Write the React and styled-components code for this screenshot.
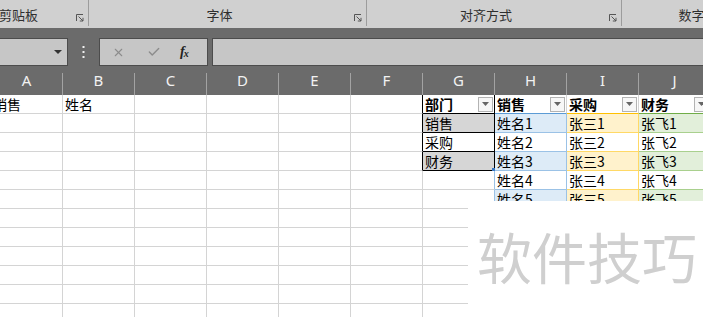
import styled, { createGlobalStyle } from "styled-components";
import { X, Check } from "lucide-react";

const GlobalStyle = createGlobalStyle`
  html, body { margin: 0; padding: 0; background: #fff; overflow: hidden; }
  body {
    width: 703px;
    height: 317px;
    font-family: "Noto Sans CJK SC", "Noto Sans", sans-serif;
  }
  * { box-sizing: border-box; }
`;

const Page = styled.div`
  width: 703px;
  height: 317px;
  overflow: hidden;
  display: flex;
  flex-direction: column;
`;

/* ribbon group captions */
const Ribbon = styled.div`
  height: 28px;
  background: #d0d0d0;
  display: flex;
  flex-shrink: 0;
`;

const Group = styled.div`
  position: relative;
  flex: 0 0 ${(p) => p.$w}px;
  margin-left: ${(p) => p.$offset || 0}px;
  border-right: 1px solid #9c9c9c;
  height: 26px;
  display: flex;
  justify-content: center;
  padding: 7px 16px 0 0;
  font-size: 13px;
  line-height: 16px;
  color: #2e2e2e;
  white-space: nowrap;
  &:last-child { border-right: none; }
`;

const Launcher = styled.svg`
  position: absolute;
  right: 4px;
  top: 14px;
  width: 8px;
  height: 8px;
`;

/* dark area: formula bar + column letters */
const Dark = styled.div`
  background: #6b6b6b;
  padding-top: 10px;
  flex-shrink: 0;
`;

const FormulaRow = styled.div`
  height: 28px;
  display: flex;
  align-items: stretch;
`;

const Box = styled.div`
  background: #c6c6c6;
  border: 1px solid #4c4c4c;
  display: flex;
  align-items: center;
`;

const NameBox = styled(Box)`
  width: 70px;
  margin-left: -2px;
  justify-content: flex-end;
  padding-right: 5px;
`;

const Dots = styled.div`
  width: 31px;
  display: flex;
  align-items: center;
  justify-content: center;
`;

const FnBox = styled(Box)`
  width: 109px;
  padding-left: 12px;
  gap: 22px;
  color: #8c8c8c;
`;

const Fx = styled.span`
  font-family: "Liberation Serif", serif;
  font-style: italic;
  font-weight: bold;
  color: #222;
  font-size: 14px;
  letter-spacing: -1px;
  margin-left: -3px;
  sub { font-size: 10px; vertical-align: -1px; }
`;

const Input = styled(Box)`
  flex: 1;
  margin-left: 4px;
  margin-right: -2px;
`;

const Grid = styled.div`
  display: grid;
  grid-template-columns: repeat(10, 72px);
  margin-left: -9px;
`;

const HeaderGrid = styled(Grid)`
  grid-auto-rows: 29px;
`;

const ColHead = styled.div`
  position: relative;
  color: #f2f2f2;
  font-family: "Noto Sans", sans-serif;
  font-size: 15px;
  line-height: 29px;
  text-align: center;
  padding-right: 1px;
  &::after {
    content: "";
    position: absolute;
    right: 0;
    top: 7px;
    bottom: 0;
    width: 1px;
    background: #a3a3a3;
  }
`;

/* worksheet */
const SheetArea = styled.div`
  position: relative;
  flex: 1;
  overflow: hidden;
`;

const CellGrid = styled(Grid)`
  grid-auto-rows: 19px;
`;

const Cell = styled.div`
  position: relative;
  background: ${(p) => p.$fill || "#fff"};
  border-right: 1px solid ${(p) => p.$right || "#d4d4d4"};
  border-bottom: 1px solid ${(p) => p.$bottom || "#d4d4d4"};
  font-size: 14px;
  line-height: 18px;
  padding-left: 2px;
  color: #000;
  font-weight: ${(p) => (p.$bold ? 700 : 400)};
  white-space: nowrap;
  display: flex;
  align-items: center;
  justify-content: space-between;
`;

const Filter = styled.div`
  width: 15px;
  height: 15px;
  margin-right: 1px;
  background: #f7f7f7;
  border: 1px solid #b3b3b3;
  display: flex;
  align-items: center;
  justify-content: center;
`;

const Handle = styled.div`
  position: absolute;
  right: -2px;
  bottom: -2px;
  width: 4px;
  height: 4px;
  background: #3a78c4;
`;

const Overlay = styled.div`
  position: absolute;
  left: 468px;
  top: 106px;
  right: 0;
  bottom: 0;
  background: #fff;
  padding: 27px 0 0 9px;
`;

const Watermark = styled.div`
  font-size: 55px;
  line-height: 55px;
  color: #cfcfcf;
  white-space: nowrap;
`;

const LauncherIcon = () => (
  <Launcher viewBox="0 0 8 8" fill="none" stroke="#555" strokeWidth="1">
    <path d="M0.5 7V0.5H7" />
    <path d="M2.5 2.5L7 7M7 3.8V7H3.8" />
  </Launcher>
);

const Caret = () => (
  <svg width="7" height="4" viewBox="0 0 7 4">
    <path d="M0 0H7L3.5 4Z" fill="#666" />
  </svg>
);

const groups = [
  { label: "剪贴板", w: 124, offset: -35 },
  { label: "字体", w: 278 },
  { label: "对齐方式", w: 255 },
  { label: "数字", w: 155 },
];

const letters = ["A", "B", "C", "D", "E", "F", "G", "H", "I", "J"];

const dept = ["部门", "销售", "采购", "财务"];
const tables = [
  { head: "销售", name: "姓名", fill: "#ddebf7", line: "#9bc2e6", top: "#5b9bd5" },
  { head: "采购", name: "张三", fill: "#fff2cc", line: "#ffd966", top: "#ffc000" },
  { head: "财务", name: "张飞", fill: "#e2efda", line: "#a9d08e", top: "#70ad47" },
];

function cellSpec(r, c) {
  const spec = {};
  if (r === 0 && c === 0) spec.text = "销售";
  if (r === 0 && c === 1) spec.text = "姓名";
  if (c === 5 && r <= 3) spec.right = "#000";
  if (c === 6) {
    if (r <= 3) {
      spec.text = dept[r];
      spec.right = "#000";
      spec.bottom = "#000";
      if (r === 0) { spec.bold = true; spec.filter = true; }
      if (r === 1 || r === 3) spec.fill = "#d6d6d6";
      if (r === 3) spec.handle = true;
    } else if (r <= 5) {
      spec.right = "#9bc2e6";
    }
  }
  if (c >= 7 && r <= 5) {
    const t = tables[c - 7];
    if (r === 0) {
      spec.text = t.head;
      spec.bold = true;
      spec.filter = true;
      spec.bottom = t.top;
    } else {
      spec.text = `${t.name}${r}`;
      spec.bottom = t.line;
      spec.right = t.line;
      if (r % 2 === 1) spec.fill = t.fill;
    }
  }
  return spec;
}

export default function App() {
  const rows = Array.from({ length: 12 }, (_, r) => r);
  return (
    <Page>
      <GlobalStyle />
      <Ribbon>
        {groups.map((g) => (
          <Group key={g.label} $w={g.w} $offset={g.offset}>
            {g.label}
            <LauncherIcon />
          </Group>
        ))}
      </Ribbon>

      <Dark>
        <FormulaRow>
          <NameBox>
            <svg width="8" height="4" viewBox="0 0 8 4">
              <path d="M0 0H8L4 4Z" fill="#333" />
            </svg>
          </NameBox>
          <Dots>
            <svg width="3" height="13" viewBox="0 0 3 13">
              <rect x="0.5" y="0" width="2" height="2" fill="#f0f0f0" />
              <rect x="0.5" y="5" width="2" height="2" fill="#f0f0f0" />
              <rect x="0.5" y="10" width="2" height="2" fill="#f0f0f0" />
            </svg>
          </Dots>
          <FnBox>
            <X size={13} strokeWidth={2} />
            <Check size={14} strokeWidth={2.4} />
            <Fx>f<sub>x</sub></Fx>
          </FnBox>
          <Input />
        </FormulaRow>
        <HeaderGrid>
          {letters.map((l) => (
            <ColHead key={l}>{l}</ColHead>
          ))}
        </HeaderGrid>
      </Dark>

      <SheetArea>
        <CellGrid>
          {rows.map((r) =>
            letters.map((l, c) => {
              const s = cellSpec(r, c);
              return (
                <Cell key={`${l}${r}`} $fill={s.fill} $right={s.right} $bottom={s.bottom} $bold={s.bold}>
                  <span>{s.text}</span>
                  {s.filter && (
                    <Filter>
                      <Caret />
                    </Filter>
                  )}
                  {s.handle && <Handle />}
                </Cell>
              );
            })
          )}
        </CellGrid>
        <Overlay>
          <Watermark>软件技巧</Watermark>
        </Overlay>
      </SheetArea>
    </Page>
  );
}
